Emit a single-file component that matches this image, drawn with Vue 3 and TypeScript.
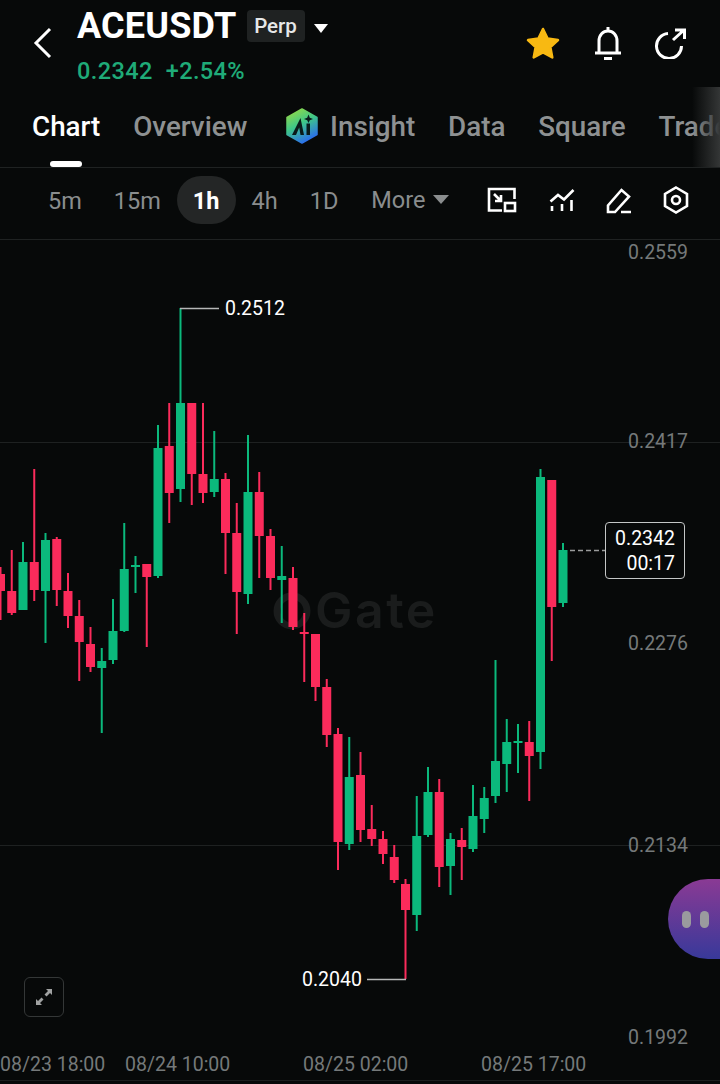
<script setup lang="ts">
interface Candle {
  top: number
  bottom: number
  high: number
  low: number
  up: boolean
}

// body top, body bottom, wick top, wick bottom, green or red (page pixels)
const rows: [number, number, number, number, number][] = [
  [574, 591, 567, 620, 0], [591, 613, 550, 615, 0], [562, 610, 542, 610, 1], [562, 590, 469, 601, 0],
  [540, 591, 533, 643, 1], [539, 590, 537, 606, 0], [591, 616, 573, 628, 0], [616, 642, 600, 681, 0],
  [644, 667, 627, 672, 0], [661, 668, 648, 733, 1], [631, 660, 599, 664, 1], [569, 631, 523, 632, 1],
  [565, 567, 556, 593, 1], [564, 577, 564, 647, 0], [448, 576, 425, 578, 1], [446, 493, 403, 523, 0],
  [403, 489, 308, 502, 1], [403, 474, 403, 505, 0], [474, 493, 403, 503, 0], [479, 492, 431, 497, 1],
  [479, 533, 473, 574, 0], [533, 592, 503, 634, 0], [492, 594, 435, 604, 1], [492, 536, 472, 578, 0],
  [536, 578, 529, 590, 0], [576, 580, 546, 623, 1], [578, 627, 567, 630, 0], [632, 634, 613, 682, 0],
  [634, 687, 634, 701, 0], [687, 735, 679, 747, 0], [734, 842, 728, 870, 0], [777, 844, 737, 850, 1],
  [775, 830, 752, 842, 0], [829, 839, 805, 846, 0], [839, 854, 831, 864, 0], [857, 880, 845, 883, 0],
  [884, 910, 879, 979, 0], [836, 915, 796, 931, 1], [792, 835, 767, 837, 1], [792, 867, 779, 887, 0],
  [839, 866, 833, 895, 1], [840, 847, 828, 880, 0], [816, 849, 785, 852, 1], [798, 819, 787, 833, 1],
  [761, 796, 660, 803, 1], [742, 764, 719, 792, 1], [741, 743, 724, 773, 1], [742, 756, 721, 801, 0],
  [477, 752, 469, 769, 1], [480, 607, 480, 661, 0], [550, 603, 543, 607, 1],
]

const candles: Candle[] = rows.map(([top, bottom, high, low, up]) => ({
  top,
  bottom,
  high,
  low,
  up: up === 1,
}))

const xOf = (i: number) => 0.5 + i * 11.25

const prices = [
  { label: '0.2559', y: 259 },
  { label: '0.2417', y: 448 },
  { label: '0.2276', y: 650 },
  { label: '0.2134', y: 852 },
  { label: '0.1992', y: 1044 },
]

const dates = [
  { label: '08/23 18:00', x: 0 },
  { label: '08/24 10:00', x: 125 },
  { label: '08/25 02:00', x: 303 },
  { label: '08/25 17:00', x: 481 },
]

const tabs = ['Overview', 'Insight', 'Data', 'Square', 'Trade']
const periods = ['5m', '15m', '1h', '4h', '1D']
</script>

<template>
  <div class="page">
    <header class="header">
      <svg class="back" viewBox="0 0 20 32" width="20" height="32">
        <path d="M17 2 L3 16 L17 30" />
      </svg>
      <div class="symbol">
        <div class="title-row">
          <span class="title">ACEUSDT</span>
          <span class="badge">Perp</span>
          <span class="caret"></span>
        </div>
        <div class="quote">
          <span>0.2342</span>
          <span>+2.54%</span>
        </div>
      </div>
      <div class="actions">
        <svg viewBox="0 0 36 34" width="36" height="34">
          <path class="star" d="M18 3 L22.6 12.6 L33 14 L25.4 21.2 L27.3 31.4 L18 26.4 L8.7 31.4 L10.6 21.2 L3 14 L13.4 12.6 Z" />
        </svg>
        <svg class="line" viewBox="0 0 32 36" width="32" height="36">
          <path d="M3 28 H29 M7 28 V16 C7 10 11 6 16 6 C21 6 25 10 25 16 V28 M16 2 V6 M12 33.5 H20" />
        </svg>
        <svg class="line" viewBox="0 0 32 32" width="32" height="32">
          <path d="M26.5 19 A12.5 12.5 0 1 1 13 6.5 M18 13 L29 3 M20 3 H29.5 V12" />
        </svg>
      </div>
    </header>

    <nav class="tabs">
      <div class="tab active">Chart</div>
      <div v-for="tab in tabs" :key="tab" class="tab" :class="{ insight: tab === 'Insight' }">
        <svg v-if="tab === 'Insight'" class="ai" viewBox="0 0 34 36" width="34" height="36">
          <defs>
            <linearGradient id="aiFill" x1="0.15" y1="0.05" x2="0.6" y2="1">
              <stop offset="0" stop-color="#8fd84a" />
              <stop offset="0.45" stop-color="#3fc788" />
              <stop offset="1" stop-color="#2a6cf0" />
            </linearGradient>
          </defs>
          <path d="M17 1 L32 9.5 V26.5 L17 35 L2 26.5 V9.5 Z" fill="url(#aiFill)" stroke="url(#aiFill)" stroke-width="1.5" stroke-linejoin="round" />
          <path d="M7 27 L15.5 10 L19 27 H15.5 L14.2 19.5 L11 27 Z" fill="#0a1a1a" />
          <path d="M21.5 15.5 H25 V27 H21.5 Z" fill="#0a1a1a" />
          <path d="M23.5 6.5 L24.8 9.7 L28 11 L24.8 12.3 L23.5 15 L22.2 12.3 L19 11 L22.2 9.7 Z" fill="#0a1a1a" />
        </svg>
        {{ tab }}
      </div>
      <div class="fade"></div>
    </nav>

    <div class="toolbar">
      <div class="periods">
        <span v-for="p in periods" :key="p" class="period" :class="{ current: p === '1h' }">{{ p }}</span>
        <span class="period more">More<i class="more-caret"></i></span>
      </div>
      <div class="tools">
        <svg class="tool" viewBox="0 0 30 26" width="30" height="26">
          <path d="M15 23.5 H2 V2 H27.5 V12 M7 7 L14 14 M14 8 V14 H8" />
          <rect x="18" y="16" width="10" height="8" />
        </svg>
        <svg class="tool" viewBox="0 0 26 24" width="26" height="24">
          <path d="M1.5 13.5 L9 7 L15 11.5 L24.5 2 M3 18 V23 M13 16 V23 M22.5 12 V23" />
        </svg>
        <svg class="tool" viewBox="0 0 26 27" width="26" height="27">
          <path d="M2 25 V18.5 L15.5 3 L23 9.5 L9 25 Z M15 25 H25" />
        </svg>
        <svg class="tool" viewBox="0 0 26 28" width="26" height="28">
          <path d="M13 1.5 L24 8 V20 L13 26.5 L2 20 V8 Z" />
          <circle cx="13" cy="14" r="4" />
        </svg>
      </div>
    </div>

    <section class="chart">
      <svg class="plot" viewBox="0 240 720 840" width="720" height="840">
        <line class="grid" x1="0" x2="720" y1="442.5" y2="442.5" />
        <line class="grid" x1="0" x2="720" y1="845.5" y2="845.5" />

        <circle class="mark-ring" cx="292" cy="611" r="15" />
        <text class="mark" x="315" y="628">Gate</text>

        <g v-for="(c, i) in candles" :key="i" :class="c.up ? 'up' : 'down'">
          <line class="wick" :x1="xOf(i)" :x2="xOf(i)" :y1="c.high" :y2="c.low" />
          <rect class="body" :x="xOf(i) - 4.5" :y="c.top" width="9" :height="c.bottom - c.top" />
        </g>

        <path class="leader" d="M180 308.5 H219 M367 979.5 H406" />
        <text class="extreme" x="225" y="315">0.2512</text>
        <text class="extreme" x="302" y="986">0.2040</text>

        <text v-for="p in prices" :key="p.label" class="axis" x="688" :y="p.y" text-anchor="end">{{ p.label }}</text>
        <text v-for="d in dates" :key="d.label" class="axis" :x="d.x" y="1071">{{ d.label }}</text>

        <line class="last" x1="570" x2="606" y1="550.5" y2="550.5" />
      </svg>

      <div class="price-tag">
        <span>0.2342</span>
        <span>00:17</span>
      </div>

      <div class="expand">
        <svg viewBox="0 0 20 20" width="20" height="20">
          <path d="M12 2 H18 V8 L16 6 L12.5 9.5 L10.5 7.5 L14 4 Z M8 18 H2 V12 L4 14 L7.5 10.5 L9.5 12.5 L6 16 Z" />
        </svg>
      </div>

      <div class="assistant">
        <i></i>
        <i></i>
      </div>
    </section>
  </div>
</template>

<style scoped>
.page {
  width: 720px;
  height: 1084px;
  display: flex;
  flex-direction: column;
  overflow: hidden;
  background: #070909;
  color: #fff;
  font-family: Roboto, "Liberation Sans", sans-serif;
}

.header {
  height: 87px;
  flex: none;
  display: flex;
  align-items: flex-start;
  box-sizing: border-box;
  padding: 8px 33px 0 33px;
}

.back {
  margin-top: 19px;
  fill: none;
  stroke: #fff;
  stroke-width: 3;
}

.symbol {
  margin-left: 24px;
}

.title-row {
  display: flex;
  align-items: center;
  height: 36px;
}

.title {
  font-size: 36px;
  font-weight: 700;
  letter-spacing: 0.2px;
  line-height: 36px;
}

.badge {
  margin-left: 10px;
  width: 58px;
  height: 32px;
  border-radius: 4px;
  background: #1f2222;
  font-size: 20.5px;
  font-weight: 500;
  line-height: 32px;
  text-align: center;
  color: #e6e8e8;
}

.caret {
  margin-left: 9px;
  margin-top: 4px;
  border-left: 7px solid transparent;
  border-right: 7px solid transparent;
  border-top: 9px solid #fff;
}

.quote {
  display: flex;
  gap: 13px;
  margin-top: 14px;
  font-size: 23.5px;
  font-weight: 500;
  line-height: 26px;
  letter-spacing: 0.4px;
  color: #1fab78;
}

.actions {
  margin-left: auto;
  display: flex;
  align-items: center;
  gap: 31px;
  margin-top: 17px;
}

.star {
  fill: #f8b912;
  stroke: #f8b912;
  stroke-width: 2.5;
  stroke-linejoin: round;
}

.line {
  fill: none;
  stroke: #fff;
  stroke-width: 3;
}

.tabs {
  position: relative;
  height: 81px;
  flex: none;
  display: flex;
  align-items: center;
  gap: 32.8px;
  box-sizing: border-box;
  padding: 0 0 2px 32px;
  border-bottom: 1px solid #1f2222;
  font-size: 27.8px;
  font-weight: 500;
  white-space: nowrap;
  overflow: hidden;
  color: #8e9192;
}

.tab {
  display: flex;
  align-items: center;
  flex: none;
}

.tab.insight {
  margin-left: 5px;
}

.ai {
  margin-right: 11px;
}

.tab.active {
  position: relative;
  align-self: stretch;
  color: #fff;
}

.tab.active::after {
  content: "";
  position: absolute;
  left: 18px;
  bottom: -2px;
  width: 32px;
  height: 6px;
  border-radius: 3px;
  background: #fff;
}

.fade {
  position: absolute;
  top: 0;
  right: 0;
  bottom: 0;
  width: 28px;
  background: linear-gradient(90deg, rgba(52, 54, 54, 0), #343636);
}

.toolbar {
  height: 72px;
  flex: none;
  display: flex;
  align-items: center;
  box-sizing: border-box;
  padding: 0 0 7px 32px;
  border-bottom: 1px solid #1f2222;
}

.periods {
  display: flex;
  align-items: center;
  font-size: 23.5px;
  color: #8a8d8e;
}

.period {
  padding: 0 16px;
  height: 48px;
  line-height: 50px;
  border-radius: 24px;
}

.period.current {
  background: #242626;
  color: #fff;
  font-weight: 700;
}

.more {
  display: flex;
  align-items: center;
  gap: 8px;
  margin-left: 1px;
}

.more-caret {
  border-left: 8px solid transparent;
  border-right: 8px solid transparent;
  border-top: 9px solid #8a8d8e;
  margin-top: -1px;
}

.tools {
  margin-left: 22px;
  display: flex;
  align-items: center;
  gap: 31.3px;
}

.tool {
  fill: none;
  stroke: #fff;
  stroke-width: 2.6;
}

.chart {
  position: relative;
  flex: none;
  height: 840px;
  border-bottom: 1px solid #1c1f1f;
}

.plot {
  display: block;
}

.grid {
  stroke: #1e2121;
  stroke-width: 1;
}

.mark-ring {
  fill: none;
  stroke: #1a1c1c;
  stroke-width: 7;
}

.mark {
  fill: #1a1c1c;
  font-family: Inter, sans-serif;
  font-size: 50px;
  font-weight: 600;
  letter-spacing: 2.5px;
}

.up {
  fill: #0bb97c;
  stroke: #0bb97c;
}

.down {
  fill: #fb2b5b;
  stroke: #fb2b5b;
}

.wick {
  stroke-width: 2;
}

.body {
  stroke: none;
}

.leader {
  fill: none;
  stroke: #b5b7b7;
  stroke-width: 1.4;
}

.extreme {
  fill: #fff;
  font-size: 19.5px;
}

.axis {
  fill: #75797a;
  font-size: 19.5px;
}

.last {
  stroke: #9a9c9c;
  stroke-width: 1.4;
  stroke-dasharray: 5 3;
}

.price-tag {
  position: absolute;
  left: 605px;
  top: 282px;
  width: 80px;
  height: 57px;
  box-sizing: border-box;
  padding: 3px 9px 0 0;
  display: flex;
  flex-direction: column;
  align-items: flex-end;
  border: 1px solid #c4c6c6;
  border-radius: 4px;
  background: #070909;
  font-size: 19.5px;
  line-height: 25px;
}

.expand {
  position: absolute;
  left: 24px;
  top: 737px;
  width: 40px;
  height: 40px;
  box-sizing: border-box;
  display: flex;
  align-items: center;
  justify-content: center;
  border: 1.5px solid #343737;
  border-radius: 6px;
}

.expand path {
  fill: #a0a2a2;
}

.assistant {
  position: absolute;
  right: 0;
  top: 639px;
  width: 52px;
  height: 80px;
  box-sizing: border-box;
  padding: 0 0 0 14px;
  display: flex;
  align-items: center;
  gap: 9px;
  border-radius: 40px 0 0 40px;
  background: linear-gradient(180deg, #8a3a94, #38399a);
}

.assistant i {
  width: 9px;
  height: 17px;
  border-radius: 5px;
  background: #9a9a9e;
}
</style>
